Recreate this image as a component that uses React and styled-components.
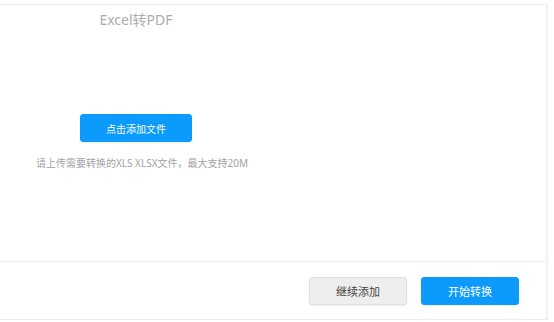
import React from 'react'
import styled, {createGlobalStyle} from 'styled-components'

const GlobalStyle = createGlobalStyle`
  body {
    margin: 0;
    background: #fff;
    font-family: 'Noto Sans', 'Noto Sans CJK SC', sans-serif;
  }
`

const Panel = styled.div`
  margin-top: 4px;
  width: 546px;
  border-top: 1px solid #ededed;
  border-right: 2px solid #f2f2f2;
  border-bottom: 1px solid #ededed;
`

const Body = styled.div`
  height: 256px;
`

const Column = styled.div`
  width: 272px;
  display: flex;
  flex-direction: column;
  align-items: center;
  padding-top: 5px;
`

const Title = styled.div`
  font-size: 14px;
  line-height: 20px;
  color: #acacac;
`

const Button = styled.button`
  width: ${p => p.$w || 98}px;
  height: 28px;
  border-radius: 3px;
  font-family: inherit;
  font-size: ${p => p.$size || 11}px;
  cursor: pointer;
  border: 1px solid ${p => (p.$primary ? '#0c9bfd' : '#e0e0e0')};
  background: ${p => (p.$primary ? '#0c9bfd' : '#eeeeee')};
  color: ${p => (p.$primary ? '#fff' : '#444')};
  box-shadow: 0 1px 2px rgba(0, 0, 0, 0.08);
  padding: 0;
`

const UploadButton = styled(Button)`
  margin-top: 84px;
`

const Hint = styled.div`
  margin-top: 14px;
  padding-left: 12px;
  font-size: 10px;
  line-height: 14px;
  color: #a2a2a2;
  white-space: nowrap;
`

const Footer = styled.div`
  height: 57px;
  border-top: 1px solid #ededed;
  display: flex;
  align-items: center;
  justify-content: flex-end;
  gap: 14px;
  padding-right: 27px;
`

export default function App() {
  return (
    <>
      <GlobalStyle />
      <Panel>
        <Body>
          <Column>
            <Title>Excel转PDF</Title>
            <UploadButton $primary $w={112} $size={10}>点击添加文件</UploadButton>
            <Hint>请上传需要转换的XLS XLSX文件，最大支持20M</Hint>
          </Column>
        </Body>
        <Footer>
          <Button>继续添加</Button>
          <Button $primary>开始转换</Button>
        </Footer>
      </Panel>
    </>
  )
}
